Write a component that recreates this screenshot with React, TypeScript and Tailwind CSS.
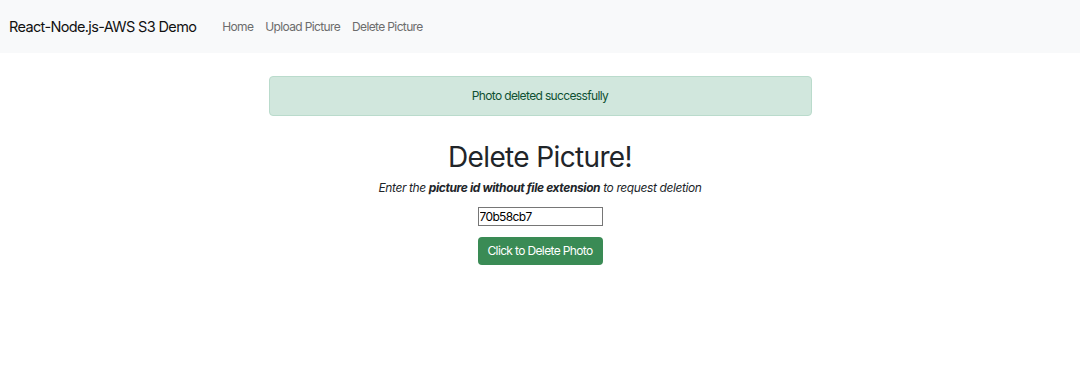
import { useState } from "react"

export default function App() {
  const [pictureId, setPictureId] = useState("70b58cb7")

  return (
    <div
      className="min-h-[366px] w-full bg-white tracking-[-0.04em] text-[#212529]"
      style={{ fontFamily: "Inter, 'Noto Sans', sans-serif" }}
    >
      {/* Navbar */}
      <nav className="flex h-[53px] items-center bg-[#f8f9fa] px-[9px]">
        <span className="mr-[26px] text-[14.5px] text-[#111]">React-Node.js-AWS S3 Demo</span>
        <div className="flex gap-[12px] text-[12px] text-[#6c6c6c]">
          <a href="#">Home</a>
          <a href="#">Upload Picture</a>
          <a href="#">Delete Picture</a>
        </div>
      </nav>

      {/* Content */}
      <div className="mx-auto mt-[23px] w-[543px]">
        <div className="flex h-[40px] items-center justify-center rounded-[4px] border border-[#badbcc] bg-[#d1e7dd] text-[12px] text-[#0f5132]">
          Photo deleted successfully
        </div>

        <div className="flex flex-col items-center">
          <h1 className="mt-[22px] text-[28px] leading-[38px] font-normal">Delete Picture!</h1>
          <p className="mt-[3px] text-[12px] italic tracking-[-0.033em]">
            Enter the <b>picture id without file extension</b> to request deletion
          </p>
          <input
            value={pictureId}
            onChange={(e) => setPictureId(e.target.value)}
            className="mt-[10px] h-[19px] w-[125px] border border-[#767676] px-[1px] text-[12px] text-black outline-none"
          />
          <button className="mt-[11px] h-[28px] w-[125px] rounded-[4px] bg-[#3a8b55] text-[12px] text-white">
            Click to Delete Photo
          </button>
        </div>
      </div>
    </div>
  )
}
